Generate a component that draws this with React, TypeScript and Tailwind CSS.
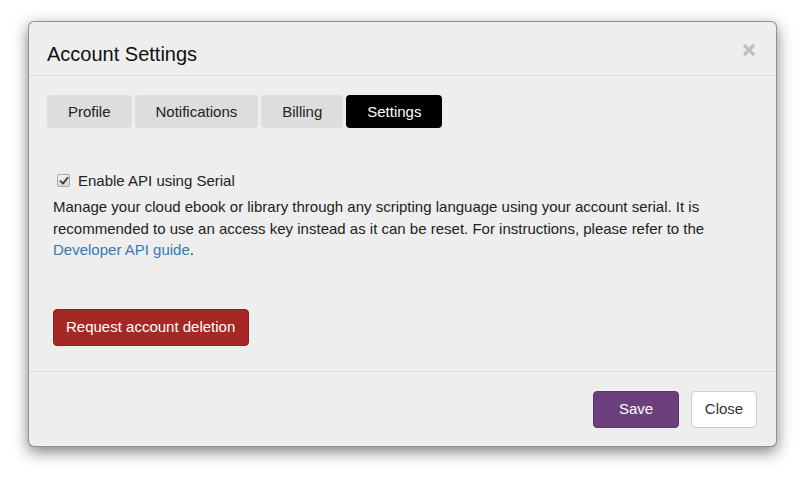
import React from "react";

export default function App() {
  return (
    <div className="min-h-[480px] w-[811px] bg-white pt-[21px] pl-[28px]" style={{ fontFamily: '"Liberation Sans", Arial, sans-serif' }}>
      <div className="w-[749px] rounded-[6px] border border-black/40 bg-[#eeeeee] shadow-[0_5px_15px_rgba(0,0,0,0.5)] text-[#333333]">
        {/* header */}
        <div className="flex items-start justify-between border-b border-[#dddddd] pl-[18px] pr-[20px] pt-[21px] pb-[10px]">
          <h4 className="text-[20px] leading-[22px] text-[#111111]">Account Settings</h4>
          <svg className="mt-[0px]" width="14" height="14" viewBox="0 0 14 14" aria-label="close">
            <path d="M2 2 L12 12 M12 2 L2 12" stroke="#bfbfbf" strokeWidth="3.2" strokeLinecap="butt" />
          </svg>
        </div>
        {/* body */}
        <div className="pt-[19px] pb-[25px]">
          <div className="flex gap-[3px] pl-[18px] text-[15px] leading-[21px]">
            <div className="rounded-[4px] bg-[#dddddd] px-[21px] py-[6px] text-[#222222]">Profile</div>
            <div className="rounded-[4px] bg-[#dddddd] px-[21px] py-[6px] text-[#222222]">Notifications</div>
            <div className="rounded-[4px] bg-[#dddddd] px-[21px] py-[6px] text-[#222222]">Billing</div>
            <div className="rounded-[4px] bg-black px-[21px] py-[6px] text-white">Settings</div>
          </div>
          <div className="pl-[24px] pr-[22px] pt-[42px] text-[15px] leading-[1.42857]">
            <label className="flex items-center">
              <span className="ml-[4px] mr-[8px] flex h-[13px] w-[13px] items-center justify-center rounded-[2px] border border-[#a6a6a6] bg-gradient-to-b from-[#f4f4f4] to-[#d8d8d8]">
                <svg width="10" height="10" viewBox="0 0 10 10">
                  <path d="M1.5 5.2 L4 7.6 L8.6 1.8" fill="none" stroke="#3a3a3a" strokeWidth="1.8" strokeLinecap="round" strokeLinejoin="round" />
                </svg>
              </span>
              <span className="text-[#222222]">Enable API using Serial</span>
            </label>
            <p className="mt-[5px] text-[#222222]">
              Manage your cloud ebook or library through any scripting language using your account serial. It is recommended to use an access key instead as it can be reset. For instructions, please refer to the{" "}
              <a className="text-[#337ab7]">Developer API guide</a>.
            </p>
            <button className="mt-[48px] flex h-[37px] items-center rounded-[4px] border border-[#8e1f1b] bg-[#a52824] px-[12px] pr-[13px] text-[15px] text-white">
              Request account deletion
            </button>
          </div>
        </div>
        {/* footer */}
        <div className="flex justify-end gap-[12px] border-t border-[#dddddd] pt-[19px] pb-[18px] pr-[19px] text-[15px]">
          <button className="flex h-[37px] w-[86px] items-center justify-center rounded-[4px] border border-[#5e3570] bg-[#6a3f7c] text-white">Save</button>
          <button className="flex h-[37px] w-[66px] items-center justify-center rounded-[4px] border border-[#cccccc] bg-white text-[#333333]">Close</button>
        </div>
      </div>
    </div>
  );
}
